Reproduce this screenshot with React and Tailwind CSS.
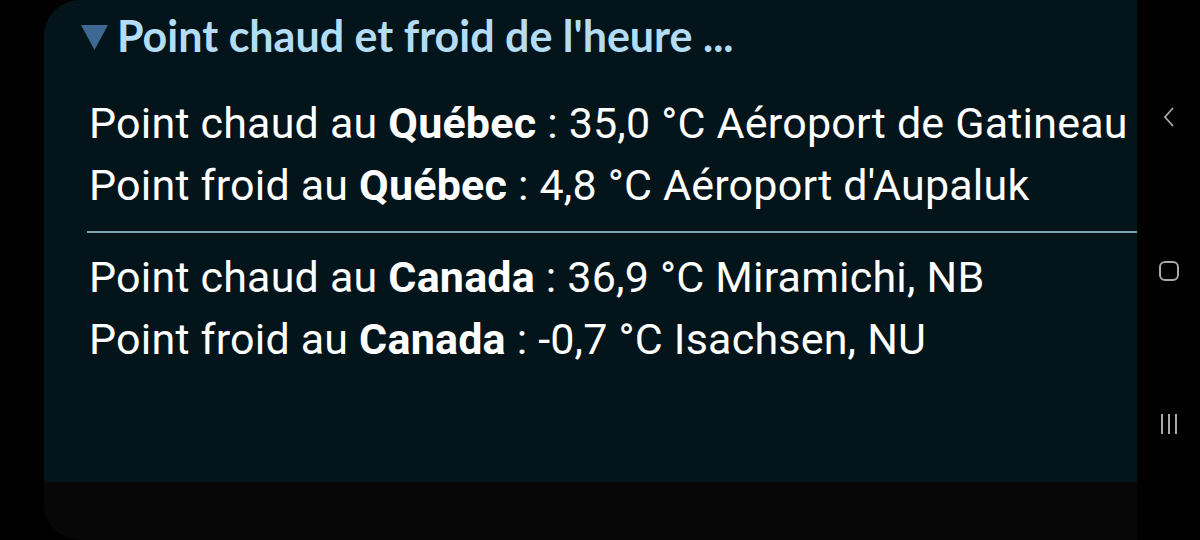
import React from "react";

const rows = [
  { kind: "chaud", place: "Québec", value: "35,0 °C Aéroport de Gatineau" },
  { kind: "froid", place: "Québec", value: "4,8 °C Aéroport d'Aupaluk" },
];

const rowsCa = [
  { kind: "chaud", place: "Canada", value: "36,9 °C Miramichi, NB" },
  { kind: "froid", place: "Canada", value: "-0,7 °C Isachsen, NU" },
];

function Line({ kind, place, value }) {
  return (
    <p className="leading-[62px] whitespace-nowrap">
      Point {kind} au <b className="font-bold">{place}</b> : {value}
    </p>
  );
}

export default function App() {
  return (
    <div className="w-[1200px] h-[540px] bg-black flex overflow-hidden">
      {/* screen */}
      <div className="ml-[44px] w-[1093px] h-full rounded-l-[36px] bg-[#080707] flex flex-col overflow-hidden">
        <div className="h-[482px] bg-[#03141a] pl-[37px]">
          <h2
            className="flex items-center mt-[13px] text-[#b3dcf5] text-[43px] font-bold leading-[46px]"
            style={{ fontFamily: "Lato, sans-serif" }}
          >
            <svg width="27" height="25" viewBox="0 0 27 25" className="mr-[9px] mt-[2px]">
              <polygon points="0,0 27,0 13.5,25" fill="#3d6894" />
            </svg>
            Point chaud et froid de l'heure ...
          </h2>
          <div
            className="mt-[33px] pl-[8px] text-white text-[43px] tracking-[0.2px]"
            style={{ fontFamily: "Roboto, sans-serif" }}
          >
            <div className="flex flex-col">
              {rows.map((r, i) => (
                <Line key={i} {...r} />
              ))}
            </div>
            <div className="h-[2px] bg-[#7ea3ad] ml-[-2px] mt-[15px] mb-[13px]" />
            <div className="flex flex-col">
              {rowsCa.map((r, i) => (
                <Line key={i} {...r} />
              ))}
            </div>
          </div>
        </div>
      </div>
      {/* nav bar */}
      <div className="flex-1 flex flex-col items-center justify-between py-[105px] text-[#a9a9a9]">
        <svg width="14" height="24" viewBox="0 0 14 24" fill="none" stroke="currentColor" strokeWidth="1.8">
          <path d="M11 3 L3 12 L11 21" />
        </svg>
        <div className="w-[20px] h-[20px] rounded-[6px] border-[2px] border-[#a9a9a9]" />
        <svg width="20" height="22" viewBox="0 0 20 22" stroke="currentColor" strokeWidth="2">
          <path d="M3 1 V21 M10 1 V21 M17 1 V21" />
        </svg>
      </div>
    </div>
  );
}
